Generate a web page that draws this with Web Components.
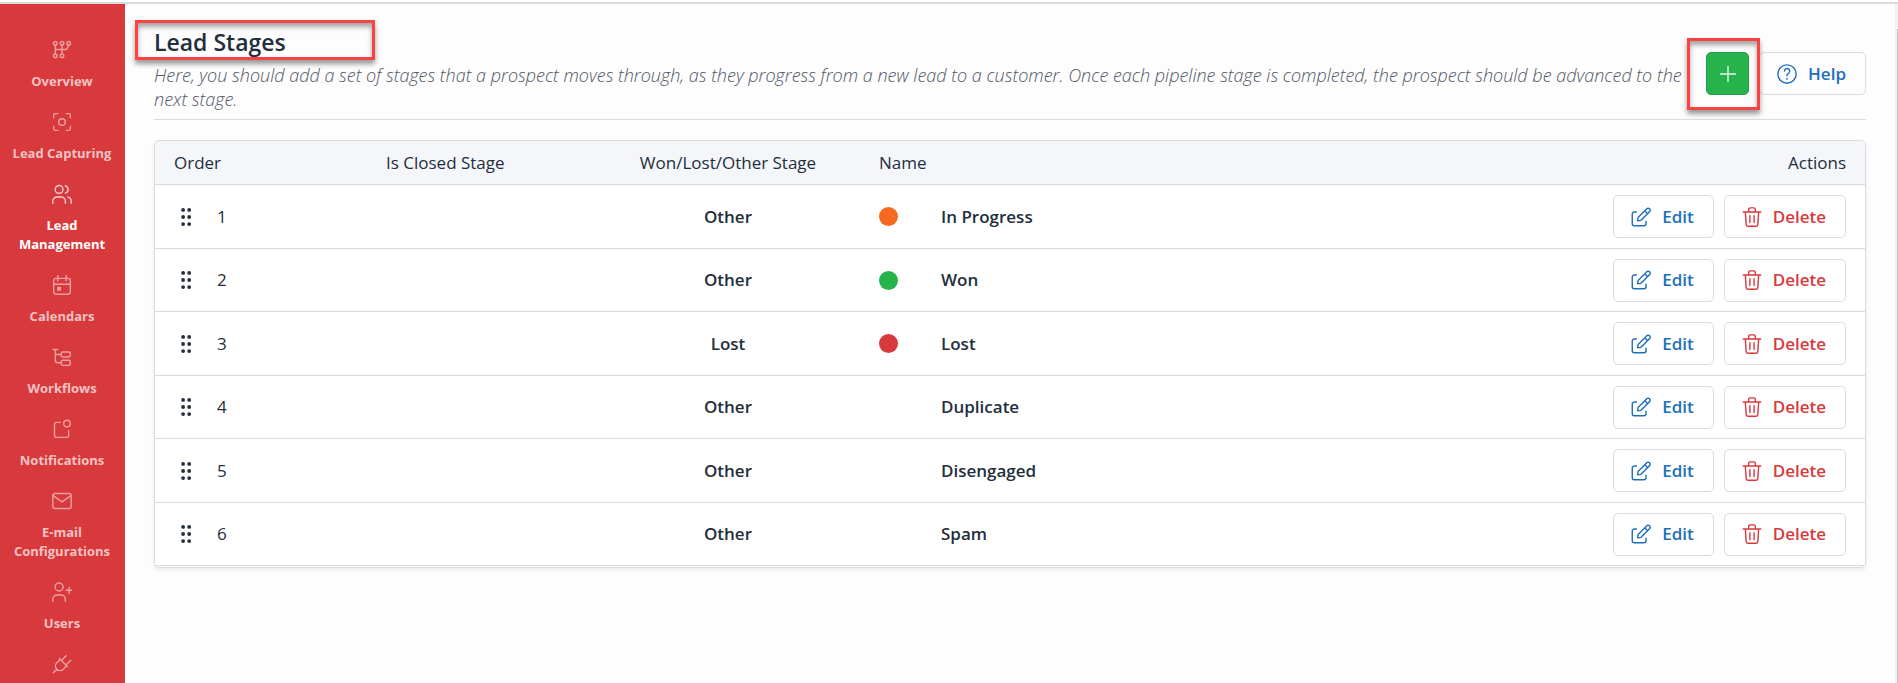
<!DOCTYPE html>
<html lang="en">
<head>
<meta charset="utf-8">
<title>Lead Stages</title>
<style>
  html, body { margin: 0; height: 100%; }
  body {
    --ink: #232e3c; --line: #d9dbdd; --red: #d7393c; --blue: #206fb9; --green: #27b34b;
    background: #fdfdfd; color: var(--ink); overflow: hidden;
    font: 17px/24px "Open Sans", "Noto Sans", sans-serif;
  }
</style>
</head>
<body>
<crm-app></crm-app>

<script>
const ICONS = {
  overview: '<circle cx="4" cy="4" r="2.2"/><circle cx="12" cy="4" r="2.2"/><circle cx="20" cy="4" r="2.2"/><circle cx="4" cy="19" r="2.2"/><circle cx="12" cy="19" r="2.2"/><path d="M4 6.5v10M12 6.500v10M4 11.500h13.500l2.500-5"/>',
  capture: '<path d="M2 7V4a2 2 0 0 1 2-2h3M17 2h3a2 2 0 0 1 2 2v3M22 17v3a2 2 0 0 1-2 2h-3M7 22H4a2 2 0 0 1-2-2v-3"/><circle cx="12" cy="12" r="4"/>',
  leads: '<circle cx="8.500" cy="6.500" r="4.700"/><path d="M1 23v-2.500a5 5 0 0 1 5-5h5a5 5 0 0 1 5 5V23M16 2.200a4.500 4.500 0 0 1 0 8.700M19 15.700a5 5 0 0 1 4 4.800V23"/>',
  calendar: '<rect x="2" y="4" width="20" height="19" rx="2.500"/><path d="M7 1v6M17 1v6M2 11h20"/><rect x="7" y="15" width="3" height="3" fill="currentColor"/>',
  workflow: '<path d="M1 3h6M4 3v13a3 3 0 0 0 3 3h4M4 9h7"/><rect x="11" y="6" width="11" height="6" rx="2"/><rect x="11" y="16" width="11" height="6" rx="2"/>',
  notice: '<path d="M10 4H5a2 2 0 0 0-2 2v14a2 2 0 0 0 2 2h13a2 2 0 0 0 2-2v-6"/><circle cx="18" cy="5.500" r="4"/>',
  mail: '<rect x="1" y="3" width="22" height="18" rx="2.500"/><path d="M1.500 5.500L12 13l10.500-7.500"/>',
  user: '<circle cx="8.500" cy="6" r="4.800"/><path d="M1 23v-2.500a5 5 0 0 1 5-5h5a5 5 0 0 1 5 5V23M17 10h7M20.500 6.500v7"/>',
  plug: '<path d="M9 5.500l9.500 9.500M10 6.500L5.800 10.500a5.400 5.400 0 0 0 7.700 7.700l4-4.200M5.700 18.300L1.500 22.500M12.500 6.500L17 2M18 12l4.500-4.500"/>',
  grip: '<g fill="currentColor" stroke="none"><circle cx="8.500" cy="3.500" r="2.300"/><circle cx="15.800" cy="3.500" r="2.300"/><circle cx="8.500" cy="12" r="2.300"/><circle cx="15.800" cy="12" r="2.300"/><circle cx="8.500" cy="20.500" r="2.300"/><circle cx="15.800" cy="20.500" r="2.300"/></g>',
  plus: '<path d="M12 3v18M3 12h18"/>',
  help: '<circle cx="12" cy="12" r="11"/><path d="M9 8.500a3.100 3.100 0 1 1 5.200 2.300c-1.300 1-2.200 1.500-2.200 3.200M12 17.200v1"/>',
  edit: '<path d="M6.500 6H4a2.500 2.500 0 0 0-2.500 2.500V20A2.500 2.500 0 0 0 4 22.500h11.500A2.500 2.500 0 0 0 18 20v-3M8 16.500l.5-4L19 2a2.500 2.500 0 0 1 3.500 3.500L12 16zM16.500 4.500L20 8"/>',
  trash: '<path d="M1.500 6h21M4 6l1 15a2 2 0 0 0 2 2h10a2 2 0 0 0 2-2L20 6M8 6V3a2 2 0 0 1 2-2h4a2 2 0 0 1 2 2v3M9.500 10.500v8M14.500 10.500v8"/>'
};

function define(name, render) {
  customElements.define(name, class extends HTMLElement {
    connectedCallback() {
      if (this.shadowRoot) return;
      this.attachShadow({ mode: 'open' }).innerHTML = render(this);
    }
  });
}

define('ui-icon', el => `
  <style>
    :host { display: block; width: 20px; height: 20px; flex: none; }
    svg { display: block; width: 100%; height: 100%; fill: none; stroke: currentColor;
          stroke-width: 1.7; stroke-linecap: round; stroke-linejoin: round; }
  </style>
  <svg viewBox="0 0 24 24" aria-hidden="true">${ICONS[el.getAttribute('name')]}</svg>`);

define('nav-item', el => `
  <style>
    :host { display: block; }
    a { display: flex; flex-direction: column; align-items: center; gap: 12px; padding: 11px 1px 10px 0;
        color: #f5c2c3; text-decoration: none; text-align: center;
        font-size: 13px; line-height: 19px; font-weight: 700; }
    ui-icon { opacity: .75; }
    :host([active]) a { color: #fff; }
  </style>
  <a href="#" ${el.hasAttribute('active') ? 'aria-current="page"' : ''} ${el.hasAttribute('label') ? `aria-label="${el.getAttribute('label')}"` : ''}><ui-icon name="${el.getAttribute('icon')}"></ui-icon><slot></slot></a>`);

define('side-nav', () => `
  <style>
    :host { display: block; background: var(--red); overflow: hidden; }
    nav { padding-top: 25px; }
  </style>
  <nav aria-label="Main"><slot></slot></nav>`);

define('ui-button', el => `
  <style>
    :host { display: block; flex: none; }
    button { display: flex; align-items: center; justify-content: center; gap: 11px; box-sizing: border-box;
             height: 43px; padding: 0 19px 0 17px; border: 1px solid var(--line); border-radius: 5px;
             background: transparent; color: var(--blue); font: inherit; font-weight: 600; white-space: nowrap; cursor: pointer; }
    :host([kind="danger"]) button { color: var(--red); }
    :host([kind="add"]) button { width: 43px; padding: 0; background: var(--green); border-color: #249f45; color: #e3f5e7; }
    :host([kind="add"]) slot { display: none; }
  </style>
  <button type="button" ${el.hasAttribute('label') ? `aria-label="${el.getAttribute('label')}"` : ''}><ui-icon name="${el.getAttribute('icon')}"></ui-icon>${el.textContent ? '<slot></slot>' : ''}</button>`);

define('mark-box', () => `
  <style>
    :host { position: absolute; box-sizing: border-box; border: 3px solid #fb4343; pointer-events: none;
            box-shadow: 0 4px 5px rgba(0,0,0,.4), inset 0 4px 5px rgba(0,0,0,.35); }
  </style>`);

define('page-header', () => `
  <style>
    :host { display: flex; align-items: flex-start; gap: 10px; padding: 24px 0 8px; border-bottom: 1px solid var(--line); }
    .intro { flex: 1; }
    .title, .add { position: relative; }
    .add, ui-button { margin-top: 24px; }
    .add ui-button { margin-top: 0; }
    h1 { margin: 0 0 7px; font-size: 23px; line-height: 28px; font-weight: 600; }
    p { margin: 0; font-size: 18px; font-weight: 300; font-style: italic; color: #505765; }
    .title mark-box { left: -19px; top: -8px; width: 240px; height: 40px; }
    .add mark-box { left: -19px; top: -14px; width: 73px; height: 72px; z-index: 1; }
  </style>
  <div class="intro">
    <div class="title"><h1><slot name="title"></slot></h1><mark-box></mark-box></div>
    <p><slot></slot></p>
  </div>
  <div class="add"><ui-button kind="add" icon="plus" label="Add stage"></ui-button><mark-box></mark-box></div>
  <ui-button icon="help">Help</ui-button>`);

const STAGES = [
  ['Other', 'In Progress', '#f76920'],
  ['Other', 'Won', '#27b34b'],
  ['Lost', 'Lost', '#d7393c'],
  ['Other', 'Duplicate', ''],
  ['Other', 'Disengaged', ''],
  ['Other', 'Spam', '']
];

define('stage-table', () => `
  <style>
    :host { display: block; background: #fff; border: 1px solid var(--line); border-radius: 5px;
            box-shadow: 0 2px 4px rgba(35,46,60,.08); padding-bottom: 1px; overflow: hidden; }
    table { width: 100%; border-collapse: separate; border-spacing: 0; table-layout: fixed; }
    th, td { box-sizing: border-box; padding: 0; border-bottom: 1px solid var(--line); text-align: left; vertical-align: middle; }
    th { height: 44px; background: #f4f6fa; font-weight: 400; }
    th:first-child, td:first-child { padding-left: 19px; }
    th:last-child, td:last-child { padding-right: 19px; }
    td { height: 63px; font-weight: 600; }
    tr:nth-child(odd) td { height: 64px; }
    .order { width: 231px; } .closed { width: 222px; } .kind { width: 271px; } .dot { width: 62px; }
    .order, td:first-child { font-weight: 400; }
    .kind, td:nth-child(3) { text-align: center; padding-right: 31px; }
    .actions { text-align: right; }
    .grip { display: flex; align-items: center; gap: 21px; padding-left: 2px; }
    i { display: block; width: 19px; height: 19px; border-radius: 50%; }
    .buttons { display: flex; justify-content: flex-end; gap: 10px; }
  </style>
  <table>
    <thead><tr>
      <th class="order" scope="col">Order</th>
      <th class="closed" scope="col">Is Closed Stage</th>
      <th class="kind" scope="col">Won/Lost/Other Stage</th>
      <th class="dot" scope="col">Name</th>
      <th></th>
      <th class="actions" scope="col">Actions</th>
    </tr></thead>
    <tbody>${STAGES.map(([kind, name, color], i) => `
      <tr>
        <td><div class="grip"><ui-icon name="grip"></ui-icon>${i + 1}</div></td>
        <td></td>
        <td>${kind}</td>
        <td>${color ? `<i style="background:${color}"></i>` : ''}</td>
        <td>${name}</td>
        <td><div class="buttons"><ui-button icon="edit">Edit</ui-button><ui-button kind="danger" icon="trash">Delete</ui-button></div></td>
      </tr>`).join('')}
    </tbody>
  </table>`);

define('scroll-track', () => `
  <style>
    :host { display: block; background: #f1f1f1; padding: 25px 0 0 2px; box-sizing: border-box; }
    div { height: 100%; background: #c1c1c1; }
  </style><div></div>`);

define('crm-app', () => `
  <style>
    :host { display: grid; grid-template: 2px minmax(0, 1fr) / 125px minmax(0, 1fr) 3px; box-sizing: border-box;
            height: 100vh; padding-top: 2px; background: linear-gradient(#fff 2px, transparent 2px); }
    .bar { grid-column: 1 / -1; background: var(--line); }
    main { padding: 0 29px; }
    stage-table { margin-top: 20px; }
  </style>
  <div class="bar"></div>
  <side-nav>
    <nav-item icon="overview">Overview</nav-item>
    <nav-item icon="capture">Lead Capturing</nav-item>
    <nav-item icon="leads" active><span>Lead<br>Management</span></nav-item>
    <nav-item icon="calendar">Calendars</nav-item>
    <nav-item icon="workflow">Workflows</nav-item>
    <nav-item icon="notice">Notifications</nav-item>
    <nav-item icon="mail"><span>E-mail<br>Configurations</span></nav-item>
    <nav-item icon="user">Users</nav-item>
    <nav-item icon="plug" label="Integrations"></nav-item>
  </side-nav>
  <main>
    <page-header><span slot="title">Lead Stages</span>Here, you should add a set of stages that a prospect moves through, as they progress from a new lead to a customer. Once each pipeline stage is completed, the prospect should be advanced to the next stage.</page-header>
    <stage-table></stage-table>
  </main>
  <scroll-track></scroll-track>`);
</script>
</body>
</html>
